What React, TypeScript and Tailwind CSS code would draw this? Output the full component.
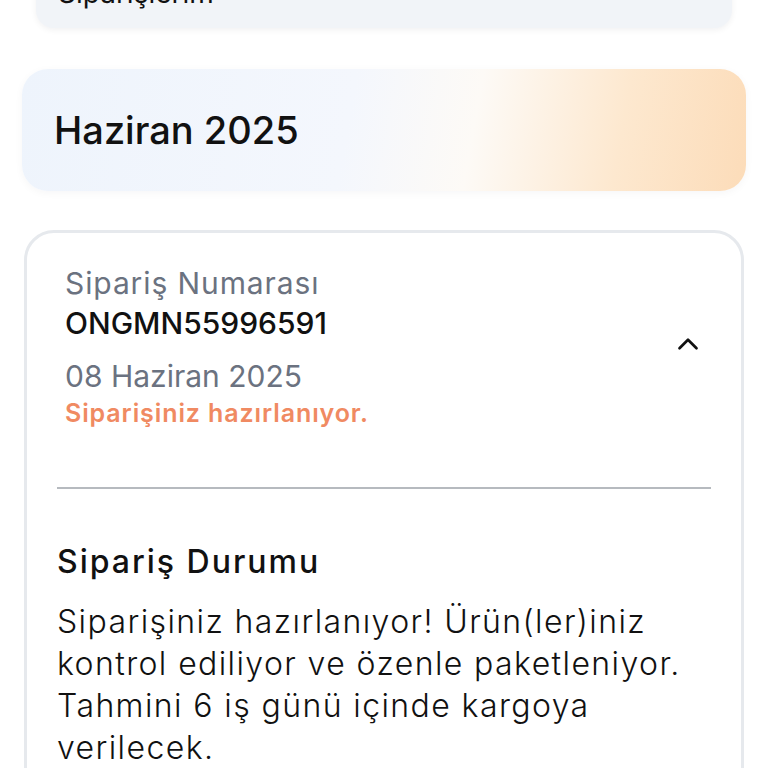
import React from "react";
import { ChevronDown, ChevronUp } from "lucide-react";

const font = { fontFamily: "Inter, 'Noto Sans', sans-serif" };

const OrderCard = () => {
  return (
    <div className="mx-[24px] mt-[39px] border-[3px] border-[#e6e9ed] rounded-[30px] bg-white">
      {/* Order summary */}
      <div className="flex items-center justify-between pl-[38px] pr-[36px] pt-[30px] pb-[57px]">
        <div>
          <div className="text-[30px] leading-[40px] tracking-[0.9px] text-[#6b7280]">Sipariş Numarası</div>
          <div className="text-[30px] leading-[40px] font-medium text-[#111111]">ONGMN55996591</div>
          <div className="mt-[13px] text-[30px] leading-[40px] text-[#6b7280]">08 Haziran 2025</div>
          <div className="text-[25px] leading-[34px] tracking-[0.9px] font-semibold text-[#f08a62]">Siparişiniz hazırlanıyor.</div>
        </div>
        <ChevronUp size={34} strokeWidth={1.9} className="text-[#111111] -mt-[6px]" />
      </div>
      <div className="mx-[30px] h-[2px] bg-[#b6babf]" />
      {/* Status details */}
      <div className="px-[30px] pt-[53px] pb-[40px]">
        <div className="text-[32px] leading-[40px] tracking-[2px] font-medium text-[#111111]">Sipariş Durumu</div>
        <p className="mt-[19px] text-[32px] leading-[42px] tracking-[1.4px] font-light text-[#111111]">
          Siparişiniz hazırlanıyor! Ürün(ler)iniz kontrol ediliyor ve özenle paketleniyor. Tahmini 6 iş günü içinde kargoya verilecek.
        </p>
      </div>
    </div>
  );
};

const App = () => {
  return (
    <div className="w-[768px] h-[768px] overflow-hidden bg-white" style={font}>
      <div className="px-[36px]">
        <div className="-mt-[42px] h-[70px] rounded-[18px] bg-[#f1f4f8] shadow-[0_2px_6px_rgba(15,23,42,0.06)] flex items-center justify-between pl-[22px] pr-[36px]">
          <span className="text-[28px] text-[#111111]">Siparişlerim</span>
          <ChevronDown size={26} strokeWidth={1.8} className="text-[#333333]" />
        </div>
      </div>
      <div className="mx-[22px] mt-[41px] h-[122px] rounded-[26px] bg-[linear-gradient(100deg,#eef4fc_0%,#f4f7fd_45%,#fdfaf6_62%,#fde8cf_82%,#fcdcb9_100%)] shadow-[0_2px_8px_rgba(15,23,42,0.04)] flex items-center px-[32px]">
        <h1 className="text-[38px] font-medium text-[#111111]">Haziran 2025</h1>
      </div>
      <OrderCard />
    </div>
  );
};

export default App;
